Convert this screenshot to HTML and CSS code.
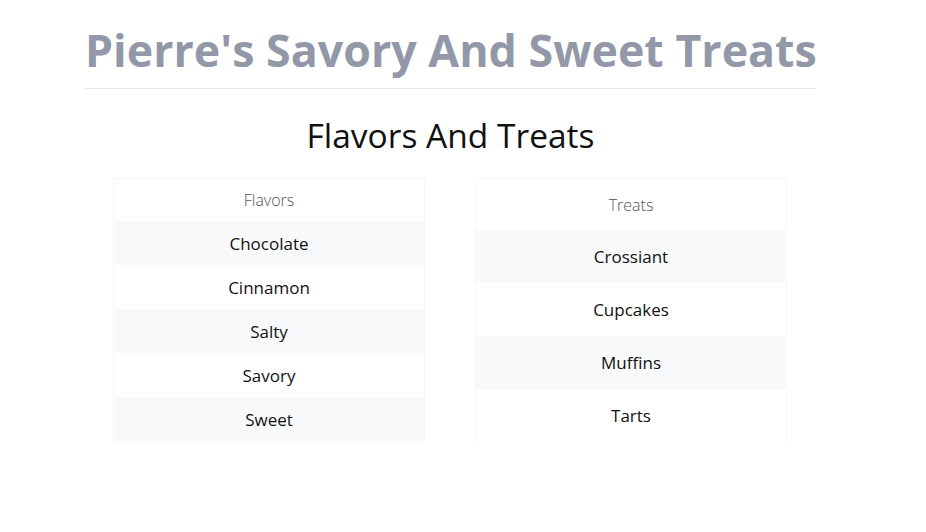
FILE: index.html
```html
<!DOCTYPE html>
<html>
<head>
<meta charset="utf-8">
<link rel="stylesheet" href="styles.css">
</head>
<body>
<div class="container">
  <h1 class="title">Pierre's Savory And Sweet Treats</h1>
  <h2 class="subtitle">Flavors And Treats</h2>
  <div class="columns">
    <div class="col">
      <table class="list list-flavors">
        <thead><tr><th>Flavors</th></tr></thead>
        <tbody>
          <tr><td>Chocolate</td></tr>
          <tr><td>Cinnamon</td></tr>
          <tr><td>Salty</td></tr>
          <tr><td>Savory</td></tr>
          <tr><td>Sweet</td></tr>
        </tbody>
      </table>
    </div>
    <div class="col">
      <table class="list list-treats">
        <thead><tr><th>Treats</th></tr></thead>
        <tbody>
          <tr><td>Crossiant</td></tr>
          <tr><td>Cupcakes</td></tr>
          <tr><td>Muffins</td></tr>
          <tr><td>Tarts</td></tr>
        </tbody>
      </table>
    </div>
  </div>
</div>
</body>
</html>
```
FILE: styles.css
```css
html, body {
  margin: 0;
  padding: 0;
  background: #fff;
}
body {
  font-family: "Open Sans", "Noto Sans", sans-serif;
  color: #111;
}
.container {
  width: 731px;
  margin-left: 85px;
}
.title {
  margin: 0;
  padding-top: 22px;
  padding-bottom: 10px;
  font-size: 44.75px;
  line-height: 56px;
  font-weight: 700;
  color: #9398a8;
  border-bottom: 1px solid #e6e6e9;
  white-space: nowrap;
}
.subtitle {
  margin: 0;
  padding-top: 22px;
  text-align: center;
  font-size: 33.5px;
  line-height: 48px;
  font-weight: 400;
  color: #111;
}
.columns {
  display: flex;
  margin-top: 19px;
  padding-left: 28px;
  gap: 50px;
}
.col {
  width: 312px;
}
.list {
  width: 312px;
  border-collapse: collapse;
  border-top: 1px solid #f2f3f4;
  border-left: 1px solid #f7f7f8;
  border-right: 1px solid #f7f7f8;
  text-align: center;
}
.list th {
  font-weight: 300;
  font-size: 16px;
  color: #555;
  padding: 0;
}
.list td {
  font-size: 17px;
  padding: 0;
}
.list-flavors th {
  height: 42px;
}
.list-flavors td {
  height: 44px;
}
.list-treats th {
  height: 51px;
}
.list-treats td {
  height: 53px;
}
.list tbody tr:nth-child(odd) {
  background: #f8f9fa;
}
```
